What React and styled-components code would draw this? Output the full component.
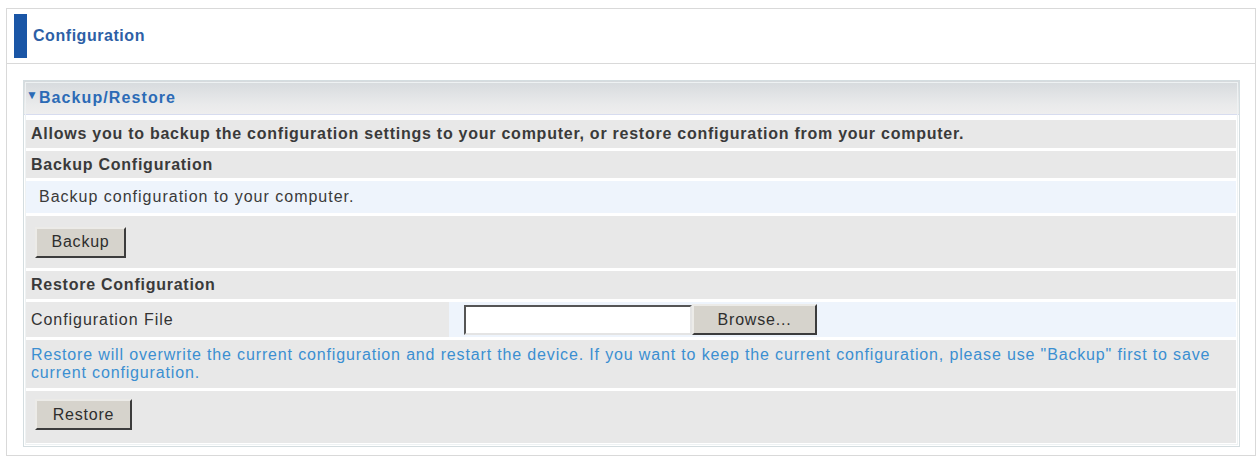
import React from "react";
import styled, { createGlobalStyle } from "styled-components";

const GlobalStyle = createGlobalStyle`
  html, body {
    margin: 0;
    padding: 0;
    background: #ffffff;
    font-family: "Liberation Sans", Arial, sans-serif;
  }
`;

const Page = styled.div`
  padding: 8px 3px 2px 6px;
`;

const Frame = styled.div`
  border: 1px solid #d9d9d9;
  height: 448px;
  box-sizing: border-box;
`;

const Header = styled.div`
  display: flex;
  align-items: center;
  height: 54px;
  padding-left: 7px;
  border-bottom: 1px solid #d9d9d9;
`;

const Marker = styled.div`
  width: 13px;
  height: 44px;
  background: #1a56a6;
`;

const HeaderTitle = styled.h1`
  margin: 0 0 0 6px;
  font-size: 16px;
  font-weight: bold;
  color: #2d5fa6;
  letter-spacing: 0.55px;
`;

const Body = styled.div`
  padding: 16px 15px 0 16px;
`;

const Panel = styled.div`
  border: 1px solid #d4dde0;
  outline: 1px solid #eef2f3;
  outline-offset: -3px;
  padding: 0 3px 3px 2px;
  display: flex;
  flex-direction: column;
  gap: 3px;
`;

const TitleBar = styled.div`
  height: 33px;
  margin: 0 -3px 2px -2px;
  padding-left: 2px;
  display: flex;
  align-items: center;
  gap: 1px;
  background: linear-gradient(#d6dadd, #e9eaeb 70%, #eeeeee);
  border-bottom: 1px solid #d7dcef;
  color: #2c6bb6;
  font-size: 16px;
  font-weight: bold;
  letter-spacing: 1.1px;
`;

const Caret = styled.span`
  font-size: 12px;
  position: relative;
  top: -3px;
  letter-spacing: 0;
`;

const Row = styled.div`
  display: flex;
  align-items: ${({ top }) => (top ? "flex-start" : "center")};
  min-height: ${({ h }) => h || 28}px;
  box-sizing: border-box;
  padding-top: ${({ top }) => top || 0}px;
  padding-left: ${({ indent }) => indent || 5}px;
  background: ${({ tone }) => (tone === "blue" ? "#eef4fc" : "#e8e8e8")};
  color: ${({ info }) => (info ? "#3b8fd1" : "#3a3a3a")};
  font-size: 16px;
  font-weight: ${({ bold }) => (bold ? "bold" : "normal")};
  line-height: 18px;
  letter-spacing: ${({ bold, info }) => (bold ? "0.75px" : info ? "0.85px" : "1px")};
`;

const Split = styled.div`
  display: grid;
  grid-template-columns: 423px 1fr;
  min-height: 35px;
  font-size: 16px;
  color: #333;
  letter-spacing: 0.95px;
`;

const Label = styled.div`
  display: flex;
  align-items: center;
  padding-left: 5px;
  background: #e9e9e9;
`;

const Value = styled.div`
  display: flex;
  align-items: center;
  padding-left: 15px;
  background: #eef4fc;
`;

const Button = styled.button`
  height: 31px;
  width: ${({ w }) => w}px;
  padding: 0;
  background: #d6d3cc;
  border: 2px solid;
  border-color: #ecebe8 #3c3c3c #3c3c3c #ecebe8;
  font-family: "Liberation Sans", Arial, sans-serif;
  font-size: 16px;
  color: #2e2e2e;
  letter-spacing: 0.8px;
`;

const FileInput = styled.div`
  width: 228px;
  height: 30px;
  box-sizing: border-box;
  background: #fff;
  border: 2px solid;
  border-color: #555 #e4e4e4 #e4e4e4 #555;
`;

export default function App() {
  return (
    <>
      <GlobalStyle />
      <Page>
        <Frame>
          <Header>
            <Marker />
            <HeaderTitle>Configuration</HeaderTitle>
          </Header>
          <Body>
            <Panel>
              <TitleBar>
                <Caret>▼</Caret>Backup/Restore
              </TitleBar>
              <Row bold>
                Allows you to backup the configuration settings to your computer, or restore configuration from your
                computer.
              </Row>
              <Row bold h={27}>Backup Configuration</Row>
              <Row tone="blue" h={32} indent={13}>
                Backup configuration to your computer.
              </Row>
              <Row h={52} indent={9}>
                <Button w={91}>Backup</Button>
              </Row>
              <Row bold h={28}>Restore Configuration</Row>
              <Split>
                <Label>Configuration File</Label>
                <Value>
                  <FileInput />
                  <Button w={125}>Browse...</Button>
                </Value>
              </Split>
              <Row info h={48}>
                Restore will overwrite the current configuration and restart the device. If you want to keep the current
                configuration, please use "Backup" first to save current configuration.
              </Row>
              <Row h={52} indent={9} top={8}>
                <Button w={97}>Restore</Button>
              </Row>
            </Panel>
          </Body>
        </Frame>
      </Page>
    </>
  );
}
